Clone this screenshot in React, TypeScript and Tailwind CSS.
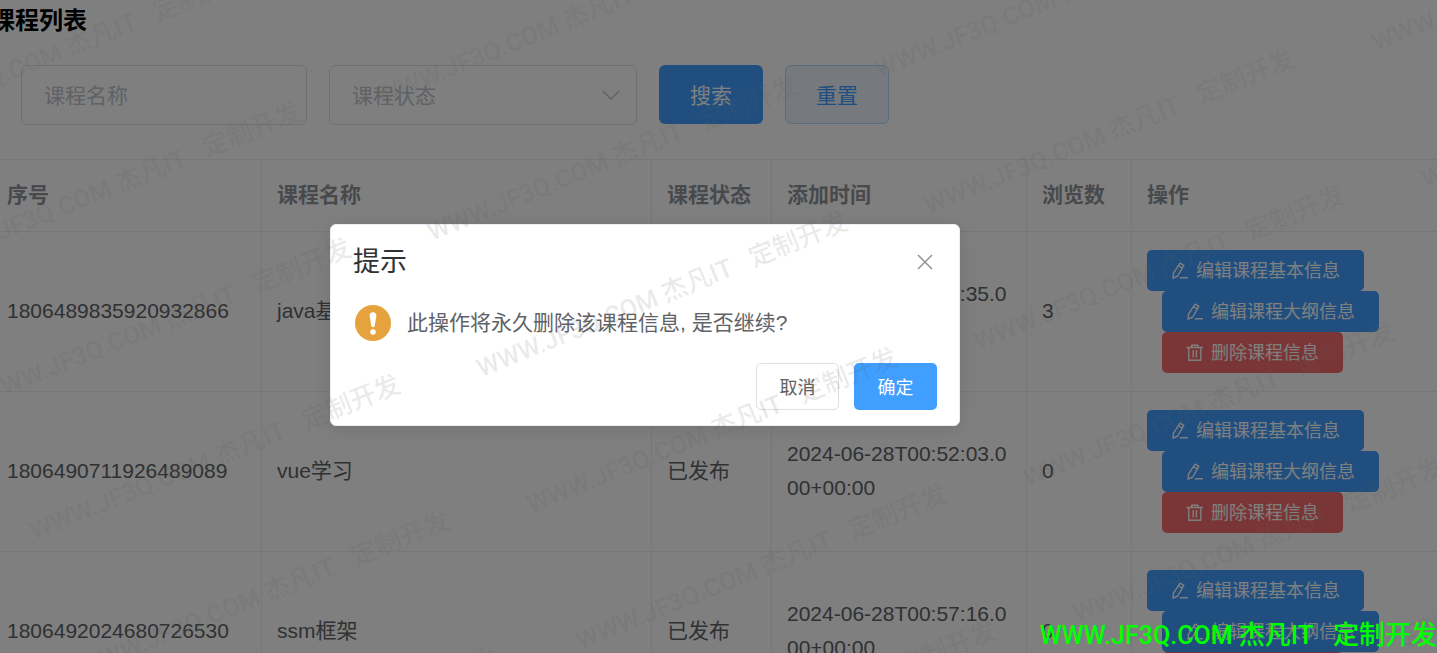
import type { ReactNode } from "react";

const courses = [
  { id: "1806489835920932866", name: "java基础", status: "已发布", time: "2024-06-28T00:48:35.000+00:00", views: 3 },
  { id: "1806490711926489089", name: "vue学习", status: "已发布", time: "2024-06-28T00:52:03.000+00:00", views: 0 },
  { id: "1806492024680726530", name: "ssm框架", status: "已发布", time: "2024-06-28T00:57:16.000+00:00", views: 0 },
];

function Mark() {
  return (
    <>
      <span className="text-[25px]">WWW.JF3Q.COM </span>
      {"杰凡IT\u00a0\u00a0 定制开发"}
    </>
  );
}

function EditIcon() {
  return (
    <svg viewBox="0 0 18 18" className="size-[18px]" fill="none" stroke="currentColor" strokeWidth="1.4" strokeLinejoin="round" strokeLinecap="round" aria-hidden="true">
      <path d="M9 1.200 12.800 3.400 6.700 14 2 16.200 2.400 11.400Z" />
      <path d="M7.600 3.800 11.300 6M9.400 15.800H16.400" />
    </svg>
  );
}

function TrashIcon() {
  return (
    <svg viewBox="0 0 18 18" className="size-[18px]" fill="none" stroke="currentColor" strokeWidth="1.4" strokeLinejoin="round" strokeLinecap="round" aria-hidden="true">
      <path d="M1 3.500H16.600M2.800 3.500V16.300H14.800V3.500M5.600 3.500V1.200H12V3.500M7.200 6.800V13M10.400 6.800V13" />
    </svg>
  );
}

const rowButton = "flex h-[41px] items-center gap-[7px] rounded-[5px] px-6 text-[18px] whitespace-nowrap text-white";

function Field({ children }: { children: ReactNode }) {
  return <th className="h-[72px] border-r border-b border-[#ebeef5] px-[15px] pb-[2px] text-left font-bold last:border-r-0">{children}</th>;
}

const cell = "border-r border-b border-[#ebeef5] px-[15px] pb-[2px]";

export default function App() {
  return (
    <div className="relative h-screen overflow-hidden bg-white font-['Liberation_Sans','Noto_Sans_CJK_SC',sans-serif]">
      <main>
        <h1 className="-ml-[9px] h-[65px] pt-[5px] text-[24px] leading-8 font-bold text-black">课程列表</h1>
        <form className="mb-[34px] flex items-start gap-[22px] pl-[21px] text-[21px]" onSubmit={(e) => e.preventDefault()}>
          <input
            aria-label="课程名称"
            placeholder="课程名称"
            className="h-[60px] w-[286px] rounded-[6px] border border-[#dcdfe6] px-[22px] pt-[2px] placeholder:text-[#c0c4cc]"
          />
          <div className="relative">
            <select
              aria-label="课程状态"
              defaultValue=""
              className="h-[60px] w-[308px] appearance-none rounded-[6px] border border-[#dcdfe6] px-[22px] pt-[2px] text-[#c0c4cc]"
            >
              <option value="">课程状态</option>
              <option value="1">已发布</option>
            </select>
            <svg viewBox="0 0 18 10" className="pointer-events-none absolute top-[25px] right-[17px] h-[10px] w-[18px]" fill="none" stroke="#c0c4cc" strokeWidth="1.5" aria-hidden="true">
              <path d="M1 1 9 9 17 1" />
            </svg>
          </div>
          <button className="h-[59px] w-[104px] rounded-[6px] bg-[#409eff] pt-[2px] text-white">搜索</button>
          <button type="reset" className="h-[59px] w-[104px] rounded-[6px] border border-[#b3d8ff] bg-[#ecf5ff] pt-[2px] text-[#409eff]">
            重置
          </button>
        </form>
        <div className="-ml-2">
          <table className="w-full table-fixed border-separate border-spacing-0 border-t border-[#ebeef5] text-[21px] leading-[34px] text-[#606266]">
            <colgroup>
              <col className="w-[270px]" />
              <col className="w-[390px]" />
              <col className="w-[120px]" />
              <col className="w-[255px]" />
              <col className="w-[105px]" />
              <col />
            </colgroup>
            <thead className="text-[#909399]">
              <tr>
                <Field>序号</Field>
                <Field>课程名称</Field>
                <Field>课程状态</Field>
                <Field>添加时间</Field>
                <Field>浏览数</Field>
                <Field>操作</Field>
              </tr>
            </thead>
            <tbody>
              {courses.map((c) => (
                <tr key={c.id}>
                  <td className={cell}>{c.id}</td>
                  <td className={cell}>{c.name}</td>
                  <td className={cell}>{c.status}</td>
                  <td className={`${cell} break-all`}>{c.time}</td>
                  <td className={cell}>{c.views}</td>
                  <td className="border-b border-[#ebeef5] px-[15px] py-[18px]">
                    <div className="flex flex-col items-start">
                      <button className={`${rowButton} bg-[#409eff]`}>
                        <EditIcon />
                        编辑课程基本信息
                      </button>
                      <button className={`${rowButton} ml-[15px] bg-[#409eff]`}>
                        <EditIcon />
                        编辑课程大纲信息
                      </button>
                      <button className={`${rowButton} ml-[15px] bg-[#f56c6c]`}>
                        <TrashIcon />
                        删除课程信息
                      </button>
                    </div>
                  </td>
                </tr>
              ))}
            </tbody>
          </table>
        </div>
      </main>

      <div className="absolute inset-0 flex items-center justify-center bg-black/50 pr-[147px] pb-[3px]">
        <section
          role="dialog"
          aria-modal="true"
          aria-labelledby="confirm-title"
          className="w-[630px] rounded-[6px] border border-[#ebeef5] bg-white px-[22px] pb-[15px] shadow-[0_3px_18px_rgba(0,0,0,0.1)]"
        >
          <header className="flex items-center justify-between pt-[19px]">
            <h2 id="confirm-title" className="text-[27px] leading-9 text-[#303133]">提示</h2>
            <button aria-label="关闭" className="p-1 text-[#909399]">
              <svg viewBox="0 0 16 16" className="size-4" fill="none" stroke="currentColor" strokeWidth="1.5" aria-hidden="true">
                <path d="M1 1 15 15M15 1 1 15" />
              </svg>
            </button>
          </header>
          <div className="flex items-center gap-4 pt-[25px] pb-[22px] pl-[2px]">
            <svg viewBox="0 0 36 36" className="size-9" aria-hidden="true">
              <circle cx="18" cy="18" r="18" fill="#e6a23c" />
              <path d="M18 7.200c-2.200 0-3.500 1.400-3.400 3.300l1.700 10.600c.3 1.400 3.100 1.400 3.400 0l1.700-10.600c.1-1.900-1.200-3.300-3.400-3.300Z" fill="#fff" />
              <circle cx="18" cy="27" r="2.800" fill="#fff" />
            </svg>
            <p className="text-[21px] leading-9 text-[#606266]">此操作将永久删除该课程信息, 是否继续?</p>
          </div>
          <footer className="flex justify-end gap-[15px] text-[18px]">
            <button className="h-[47px] w-[83px] rounded-[5px] border border-[#dcdfe6] bg-white pt-[3px] text-[#606266]">取消</button>
            <button className="h-[47px] w-[83px] rounded-[5px] bg-[#409eff] pt-[3px] text-white">确定</button>
          </footer>
        </section>
      </div>

      <div className="pointer-events-none absolute inset-0 overflow-hidden" aria-hidden="true">
        <div className="absolute top-[137px] -left-[619px] grid w-max origin-top-left -rotate-20 auto-rows-[145px] grid-cols-[repeat(5,476px)] items-start justify-items-start text-[26px] leading-[26px] font-medium whitespace-pre text-[#5a5a5a]/13 font-['Roboto','Noto_Sans_CJK_SC',sans-serif]">
          {Array.from({ length: 45 }, (_, i) => (
            <div key={i} className="origin-bottom-left -rotate-2">
              <Mark />
            </div>
          ))}
        </div>
      </div>

      <p className="absolute right-0 bottom-[2px] text-[26px] leading-[30px] font-medium whitespace-pre text-[#00ff00] font-['Roboto','Noto_Sans_CJK_SC',sans-serif]">
        <Mark />
      </p>
    </div>
  );
}
